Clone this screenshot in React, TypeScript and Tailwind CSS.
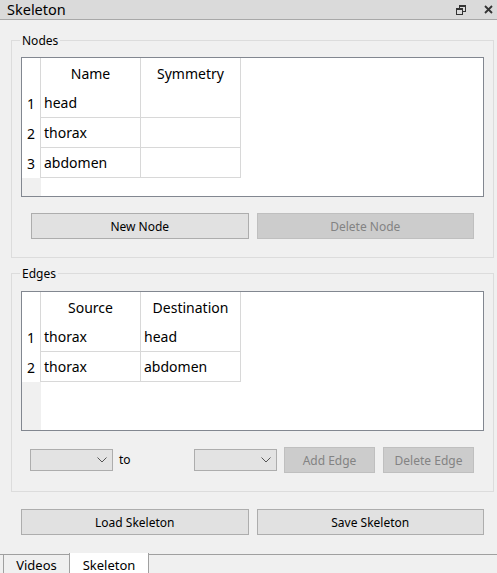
const grid = 'border-[#d8d8d8]'

interface TableProps {
  readonly headers: readonly string[]
  readonly rows: readonly (readonly string[])[]
}

function DataTable({ headers, rows }: TableProps) {
  return (
    <div className="flex h-[140px] flex-col border border-[#828790] bg-white text-[14px] text-black">
      <div className="flex h-[30px] shrink-0">
        <div className={`w-[19px] border-r ${grid}`} />
        {headers.map((h) => (
          <div key={h} className={`flex w-[100px] items-center justify-center border-r ${grid}`}>
            {h}
          </div>
        ))}
      </div>
      {rows.map((row, i) => (
        <div key={i} className="flex h-[30px] shrink-0">
          <div className={`flex w-[19px] items-center justify-center border-r ${grid}`}>{i + 1}</div>
          {row.map((cell, j) => (
            <div key={j} className={`flex w-[100px] items-center border-r border-b pl-[3px] ${grid}`}>
              {cell}
            </div>
          ))}
        </div>
      ))}
      <div className="flex flex-1">
        <div className="w-[19px] bg-[#f0f0f0]" />
      </div>
    </div>
  )
}

function Button({ label, disabled = false, className = '' }: { label: string; disabled?: boolean; className?: string }) {
  return (
    <button
      type="button"
      className={`flex h-[26px] items-center justify-center border pt-[1px] text-[12px] ${
        disabled ? 'border-[#bfbfbf] bg-[#cccccc] text-[#838383]' : 'border-[#adadad] bg-[#e1e1e1] text-black'
      } ${className}`}
    >
      {label}
    </button>
  )
}

function Combo() {
  return (
    <div className="flex h-[22px] w-[83px] items-center justify-end border border-[#adadad] bg-[#e3e3e3] pr-[5px]">
      <svg width="10" height="6" viewBox="0 0 10 6" fill="none">
        <path d="M0.5 0.5 L5 5 L9.5 0.5" stroke="#555" strokeWidth="1" />
      </svg>
    </div>
  )
}

function GroupBox({ title, className = '', children }: { title: string; className?: string; children: React.ReactNode }) {
  return (
    <div className={`relative ml-[11px] mr-[3px] border border-[#dcdcdc] px-[9px] pb-[18px] ${className}`}>
      <span className="absolute top-[-9px] left-[8px] bg-[#f0f0f0] px-[2px] text-[12px] leading-[18px] text-black">
        {title}
      </span>
      {children}
    </div>
  )
}

export default function App() {
  return (
    <div className="flex h-[573px] w-[497px] flex-col bg-[#f0f0f0] font-['Noto_Sans',sans-serif]">
      <div className="flex h-[20px] shrink-0 items-center border-b border-[#a8a8a8] bg-[#dadada] pl-[7px] pr-[4px]">
        <span className="text-[14.5px] leading-none text-black">Skeleton</span>
        <div className="ml-auto flex items-center gap-[18px]">
          <svg width="10" height="10" viewBox="0 0 10 10">
            <rect x="3.5" y="0.5" width="6" height="6" fill="none" stroke="#333" />
            <rect x="3" y="0" width="7" height="2" fill="#333" />
            <rect x="0.5" y="3.5" width="6" height="6" fill="#dadada" stroke="#333" />
            <rect x="0" y="3" width="7" height="2" fill="#333" />
          </svg>
          <svg width="9" height="9" viewBox="0 0 9 9">
            <path d="M1 1 L8 8 M8 1 L1 8" stroke="#333" strokeWidth="1.8" />
          </svg>
        </div>
      </div>

      <GroupBox title="Nodes" className="mt-[20px] pt-[16px]">
        <DataTable
          headers={['Name', 'Symmetry']}
          rows={[
            ['head', ''],
            ['thorax', ''],
            ['abdomen', ''],
          ]}
        />
        <div className="mt-[16px] flex gap-[8px] px-[10px]">
          <Button label="New Node" className="flex-1" />
          <Button label="Delete Node" disabled className="flex-1" />
        </div>
      </GroupBox>

      <GroupBox title="Edges" className="mt-[15px] pt-[17px]">
        <DataTable
          headers={['Source', 'Destination']}
          rows={[
            ['thorax', 'head'],
            ['thorax', 'abdomen'],
          ]}
        />
        <div className="mt-[16px] flex items-center pr-[10px] pl-[9px]">
          <Combo />
          <span className="ml-[6px] text-[12px] text-black">to</span>
          <div className="ml-auto flex items-center">
            <Combo />
            <Button label="Add Edge" disabled className="ml-[7px] w-[91px]" />
            <Button label="Delete Edge" disabled className="ml-[8px] w-[91px]" />
          </div>
        </div>
      </GroupBox>

      <div className="mt-[17px] flex gap-[8px] pr-[13px] pl-[21px]">
        <Button label="Load Skeleton" className="flex-1" />
        <Button label="Save Skeleton" className="flex-1" />
      </div>

      <div className="mt-auto flex h-[20px] shrink-0 text-[13px] text-black">
        <div className="mt-[1px] w-[3px] border-t border-[#a0a0a0]" />
        <div className="mt-[1px] flex w-[66px] items-center justify-center border-t border-l border-[#a0a0a0] pt-[3px]">
          Videos
        </div>
        <div className="flex w-[80px] items-center justify-center border-r border-l border-[#a0a0a0] bg-white pt-[5px]">
          Skeleton
        </div>
        <div className="mt-[1px] flex-1 border-t border-[#a0a0a0]" />
      </div>
    </div>
  )
}
